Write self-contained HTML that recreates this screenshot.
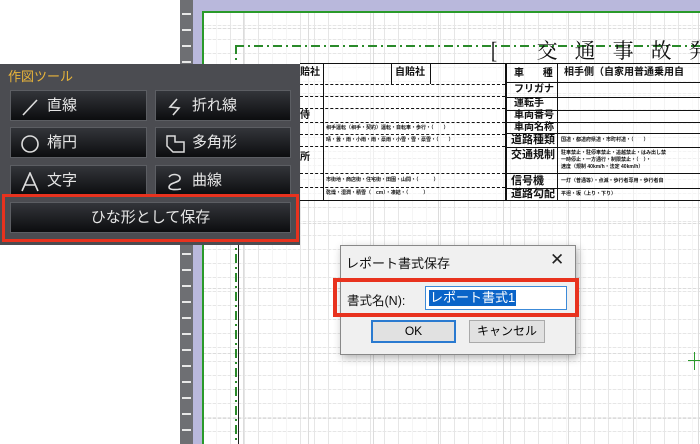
<!DOCTYPE html>
<html><head><meta charset="utf-8"><style>
*{margin:0;padding:0;box-sizing:border-box}
body{width:700px;height:444px;overflow:hidden;background:#fff;position:relative;font-family:"Liberation Sans","Noto Sans CJK JP",sans-serif}
.a{position:absolute}
#canvas{left:203px;top:12px;width:497px;height:432px;
background-image:
linear-gradient(90deg,#dcdcdc 1px,transparent 1px),
linear-gradient(#dcdcdc 1px,transparent 1px),
repeating-linear-gradient(90deg,transparent 0 13px,#e6e6e6 13px 14px),
repeating-linear-gradient(transparent 0 13px,#e6e6e6 13px 14px);
background-size:65px 65px,65px 65px,14px 14px,14px 14px;background-position:40px 0,0 16px,0 0,0 0}
#mask{left:203px;top:12px;width:497px;height:432px;background:repeating-linear-gradient(90deg,transparent 0 3px,rgba(255,255,255,.6) 3px 5px)}
.hl{position:absolute;height:0;border-top:1.5px dashed #111}
.vl{position:absolute;width:0;border-left:1.5px solid #111}
.sl{position:absolute;height:0;border-top:1.5px solid #111}
.t{position:absolute;font-weight:bold;color:#111;white-space:nowrap;line-height:1}
.btn{position:absolute;background:linear-gradient(#33353a,#0c0d0f);border:1px solid #5c5e63;color:#e6e6e6;font-size:15px;line-height:29px}
.btn svg{position:absolute;left:9px;top:6px}
.btn span{position:absolute;left:36px}
</style></head><body>
<div class="a" style="left:180px;top:0;width:13px;height:444px;background:#6e6f73"></div>
<div class="a" style="left:193px;top:0;width:10px;height:444px;background:#b9b8dc"></div>
<div class="a" style="left:193px;top:0;width:507px;height:11px;background:#b9b8dc"></div>
<div id="canvas" class="a"></div>
<div id="mask" class="a"></div>
<div class="a" style="left:202px;top:11px;width:498px;height:2px;background:#2a9a2a"></div>
<div class="a" style="left:202px;top:11px;width:2px;height:433px;background:#2a9a2a"></div>
<div class="a" style="left:182px;top:0;width:9px;height:444px;background:repeating-linear-gradient(transparent 0 13px,#e8e8e8 13px 15px,transparent 15px 16px)"></div>
<div class="a" style="left:235px;top:45px;width:465px;height:2px;background:repeating-linear-gradient(90deg,#2a8a2a 0 9px,transparent 9px 13px,#2a8a2a 13px 15px,transparent 15px 19px)"></div>
<div class="a" style="left:235px;top:45px;width:2px;height:399px;background:repeating-linear-gradient(#2a8a2a 0 9px,transparent 9px 13px,#2a8a2a 13px 15px,transparent 15px 19px)"></div>
<div class="a" style="left:238px;top:240px;width:1px;height:204px;background:#222"></div>
<div class="t" style="left:490px;top:40px;font-size:21px;font-weight:normal;letter-spacing:17px;font-family:'Noto Serif CJK SC',serif">[ 交通事故発</div>
<div class="a" style="left:688px;top:360px;width:12px;height:1px;background:#2a9a2a"></div>
<div class="a" style="left:694px;top:352px;width:1px;height:18px;background:#2a9a2a"></div>
<!-- table -->
<div class="a" style="left:300px;top:63px;width:400px;height:137px;background:rgba(255,255,255,.55)"></div>
<div class="sl" style="left:300px;top:63px;width:400px"></div>
<div class="vl" style="left:323px;top:63px;height:137px"></div>
<div class="vl" style="left:391px;top:63px;height:21px"></div>
<div class="vl" style="left:430px;top:63px;height:21px"></div>
<div class="vl" style="left:505px;top:63px;height:137px;border-left-width:2px"></div>
<div class="vl" style="left:557px;top:63px;height:137px"></div>
<div class="hl" style="left:300px;top:84px;width:205px"></div>
<div class="hl" style="left:300px;top:96px;width:205px"></div>
<div class="hl" style="left:300px;top:108px;width:205px"></div>
<div class="hl" style="left:300px;top:122px;width:205px"></div>
<div class="hl" style="left:300px;top:134px;width:205px"></div>
<div class="hl" style="left:300px;top:146px;width:205px"></div>
<div class="hl" style="left:300px;top:173px;width:205px"></div>
<div class="hl" style="left:300px;top:187px;width:205px"></div>
<div class="sl" style="left:300px;top:200px;width:400px"></div>
<div class="sl" style="left:505px;top:82px;width:195px"></div>
<div class="sl" style="left:505px;top:97px;width:195px"></div>
<div class="sl" style="left:505px;top:110px;width:195px"></div>
<div class="sl" style="left:505px;top:122px;width:195px"></div>
<div class="sl" style="left:505px;top:133px;width:195px"></div>
<div class="sl" style="left:505px;top:147px;width:195px"></div>
<div class="sl" style="left:505px;top:173px;width:195px"></div>
<div class="sl" style="left:505px;top:188px;width:195px"></div>
<div class="t" style="left:300px;top:68px;font-size:10px">賠社</div>
<div class="t" style="left:395px;top:68px;font-size:10px">自賠社</div>
<div class="t" style="left:300px;top:111px;font-size:10px">侍</div>
<div class="t" style="left:300px;top:153px;font-size:10px">所</div>
<div class="t" style="left:326px;top:126px;font-size:5px">相手運転（相手・契約）運転・自転車・歩行・（　　）</div>
<div class="t" style="left:326px;top:138px;font-size:5px">晴・曇・雨・小雨・雨・豪雨・小雪・雪・豪雪・（　　）</div>
<div class="t" style="left:326px;top:178px;font-size:5px">市街地・商店街・住宅街・田園・山間・（　　　）</div>
<div class="t" style="left:326px;top:191px;font-size:5px">乾燥・湿潤・積雪（　cm）・凍結・（　　　）</div>
<div class="t" style="left:514px;top:69px;font-size:10px;letter-spacing:8px">車 種</div>
<div class="t" style="left:564px;top:68px;font-size:10px">相手側（自家用普通乗用自</div>
<div class="t" style="left:514px;top:85px;font-size:10px">フリガナ</div>
<div class="t" style="left:514px;top:99px;font-size:10px">運転手</div>
<div class="t" style="left:514px;top:111px;font-size:10px">車両番号</div>
<div class="t" style="left:514px;top:123px;font-size:10px">車両名称</div>
<div class="t" style="left:511px;top:135px;font-size:11px">道路種類</div>
<div class="t" style="left:511px;top:150px;font-size:11px">交通規制</div>
<div class="t" style="left:511px;top:176px;font-size:11px">信号機</div>
<div class="t" style="left:511px;top:189px;font-size:11px">道路勾配</div>
<div class="t" style="left:561px;top:138px;font-size:5px">国道・都道府県道・市町村道・（　　）</div>
<div class="t" style="left:561px;top:150px;font-size:5px;line-height:7px">駐車禁止・駐停車禁止・追越禁止・はみ出し禁<br>一時停止・一方通行・制限禁止・（　）・<br>速度（規制 40km/h・法定 40km/h）</div>
<div class="t" style="left:561px;top:179px;font-size:5px">一灯（普通等）・点滅・歩行者専用・歩行者自</div>
<div class="t" style="left:561px;top:192px;font-size:5px">平坦・坂（上り・下り）</div>
<!-- panel -->
<div class="a" style="left:0;top:64px;width:300px;height:181px;background:#4b4c51"></div>
<div class="a" style="left:8px;top:66px;font-size:13px;color:#e8b43a">作図ツール</div>
<div class="btn" style="left:10px;top:90px;width:137px;height:31px"><svg width="20" height="20"><path d="M3 18L17 3" stroke="#ddd" stroke-width="1.6" fill="none"/></svg><span>直線</span></div>
<div class="btn" style="left:155px;top:90px;width:136px;height:31px"><svg width="20" height="20"><path d="M12 2L5 10L14 11L8 18" stroke="#ddd" stroke-width="1.6" fill="none"/></svg><span>折れ線</span></div>
<div class="btn" style="left:10px;top:127px;width:137px;height:31px"><svg width="20" height="20"><circle cx="10" cy="10" r="8" stroke="#ddd" stroke-width="1.6" fill="none"/></svg><span>楕円</span></div>
<div class="btn" style="left:155px;top:127px;width:136px;height:31px"><svg width="22" height="20"><path d="M2 2H10V8H19V18H8L2 12Z" stroke="#ddd" stroke-width="1.5" fill="none"/></svg><span>多角形</span></div>
<div class="btn" style="left:10px;top:165px;width:137px;height:31px"><svg width="20" height="20"><path d="M2 19L10 1L18 19M5 13H15" stroke="#ddd" stroke-width="1.6" fill="none"/></svg><span>文字</span></div>
<div class="btn" style="left:155px;top:165px;width:136px;height:31px"><svg width="20" height="20"><path d="M4 5C7 1 16 2 15 7C14 11 5 10 4 15C4 18 10 18 16 17" stroke="#ddd" stroke-width="1.6" fill="none"/></svg><span>曲線</span></div>
<div class="a" style="left:2px;top:194px;width:297px;height:48px;border:3px solid #e8321e"></div>
<div class="btn" style="left:10px;top:202px;width:281px;height:31px;text-align:center">ひな形として保存</div>
<!-- dialog -->
<div class="a" style="left:340px;top:245px;width:236px;height:110px;background:#f0f0f0;border:1px solid #888;box-shadow:2px 3px 8px rgba(0,0,0,.3)"></div>
<div class="a" style="left:346px;top:253px;font-size:13px;color:#111">レポート書式保存</div>
<div class="a" style="left:550px;top:250px;font-size:17px;color:#222">✕</div>
<div class="a" style="left:333px;top:278px;width:246px;height:39px;border:4px solid #e8321e"></div>
<div class="a" style="left:347px;top:290px;font-size:12.5px;color:#111">書式名(N):</div>
<div class="a" style="left:425px;top:286px;width:142px;height:24px;background:#fff;border:1px solid #3c8ad8"></div>
<div class="a" style="left:429px;top:290px;height:16px;padding:0 1px;background:#0a64c8;color:#fff;font-size:13px;line-height:16px">レポート書式1</div>
<div class="a" style="left:371px;top:320px;width:85px;height:23px;background:#e1e1e1;border:2px solid #2a7ad0;font-size:12px;text-align:center;line-height:19px">OK</div>
<div class="a" style="left:469px;top:320px;width:76px;height:23px;background:#e1e1e1;border:1px solid #aaa;font-size:12px;text-align:center;line-height:21px">キャンセル</div>
</body></html>
